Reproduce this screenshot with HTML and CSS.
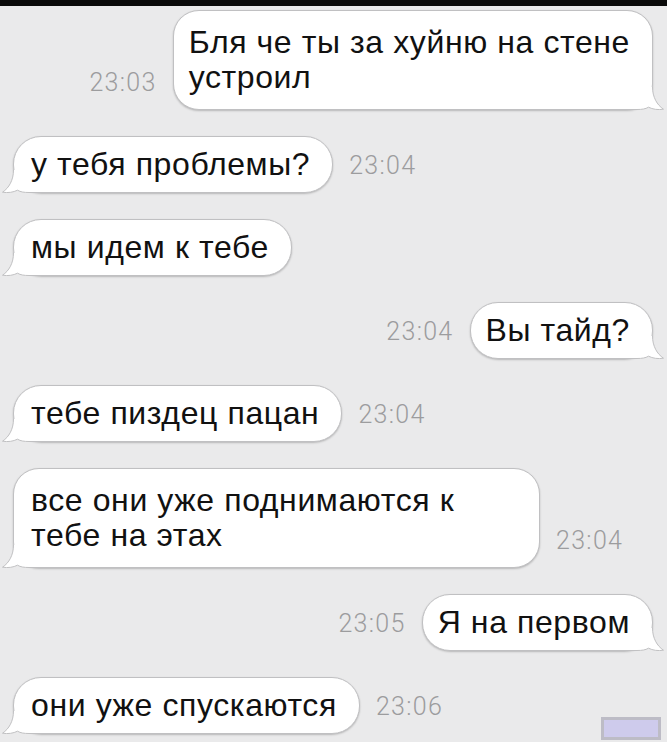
FILE: index.html
```html
<!DOCTYPE html>
<html lang="ru">
    <head>
        <meta charset="UTF-8">
        <meta name="viewport" content="width=device-width, initial-scale=1.0">
        <title>Сообщения</title>
        <link rel="stylesheet" href="styles.css">
    </head>
    <body>
        <div class="topbar"></div>
        <div id="chat">
            <div class="row row-out">
                <span class="time">23:03</span>
                <div class="bubble multi">
                    <span class="text">Бля че ты за хуйню на стене<br>устроил</span>
                    <svg class="tail tail-out" viewBox="0 0 40 23"><path class="fill" d="M11.5 0C11.5 10 7 18 0.5 22.2C6 23.2 11.5 22.2 15.5 20.2C18.5 22 22 22.5 27 22.5L40 22.5L40 0Z"/><path class="line" d="M11.5 0C11.5 10 7 18 0.5 22.2C6 23.2 11.5 22.2 15.5 20.2C18.5 22 22 22.5 27 22.5L40 22.5"/></svg>
                </div>
            </div>

            <div class="row">
                <div class="bubble">
                    <span class="text">у тебя проблемы?</span>
                    <svg class="tail" viewBox="0 0 40 23"><path class="fill" d="M11.5 0C11.5 10 7 18 0.5 22.2C6 23.2 11.5 22.2 15.5 20.2C18.5 22 22 22.5 27 22.5L40 22.5L40 0Z"/><path class="line" d="M11.5 0C11.5 10 7 18 0.5 22.2C6 23.2 11.5 22.2 15.5 20.2C18.5 22 22 22.5 27 22.5L40 22.5"/></svg>
                </div>
                <span class="time">23:04</span>
            </div>

            <div class="row">
                <div class="bubble">
                    <span class="text">мы идем к тебе</span>
                    <svg class="tail" viewBox="0 0 40 23"><path class="fill" d="M11.5 0C11.5 10 7 18 0.5 22.2C6 23.2 11.5 22.2 15.5 20.2C18.5 22 22 22.5 27 22.5L40 22.5L40 0Z"/><path class="line" d="M11.5 0C11.5 10 7 18 0.5 22.2C6 23.2 11.5 22.2 15.5 20.2C18.5 22 22 22.5 27 22.5L40 22.5"/></svg>
                </div>
            </div>

            <div class="row row-out">
                <span class="time">23:04</span>
                <div class="bubble">
                    <span class="text">Вы тайд?</span>
                    <svg class="tail tail-out" viewBox="0 0 40 23"><path class="fill" d="M11.5 0C11.5 10 7 18 0.5 22.2C6 23.2 11.5 22.2 15.5 20.2C18.5 22 22 22.5 27 22.5L40 22.5L40 0Z"/><path class="line" d="M11.5 0C11.5 10 7 18 0.5 22.2C6 23.2 11.5 22.2 15.5 20.2C18.5 22 22 22.5 27 22.5L40 22.5"/></svg>
                </div>
            </div>

            <div class="row">
                <div class="bubble">
                    <span class="text">тебе пиздец пацан</span>
                    <svg class="tail" viewBox="0 0 40 23"><path class="fill" d="M11.5 0C11.5 10 7 18 0.5 22.2C6 23.2 11.5 22.2 15.5 20.2C18.5 22 22 22.5 27 22.5L40 22.5L40 0Z"/><path class="line" d="M11.5 0C11.5 10 7 18 0.5 22.2C6 23.2 11.5 22.2 15.5 20.2C18.5 22 22 22.5 27 22.5L40 22.5"/></svg>
                </div>
                <span class="time">23:04</span>
            </div>

            <div class="row">
                <div class="bubble multi wide">
                    <span class="text">все они уже поднимаются к<br>тебе на этах</span>
                    <svg class="tail" viewBox="0 0 40 23"><path class="fill" d="M11.5 0C11.5 10 7 18 0.5 22.2C6 23.2 11.5 22.2 15.5 20.2C18.5 22 22 22.5 27 22.5L40 22.5L40 0Z"/><path class="line" d="M11.5 0C11.5 10 7 18 0.5 22.2C6 23.2 11.5 22.2 15.5 20.2C18.5 22 22 22.5 27 22.5L40 22.5"/></svg>
                </div>
                <span class="time">23:04</span>
            </div>

            <div class="row row-out">
                <span class="time">23:05</span>
                <div class="bubble">
                    <span class="text">Я на первом</span>
                    <svg class="tail tail-out" viewBox="0 0 40 23"><path class="fill" d="M11.5 0C11.5 10 7 18 0.5 22.2C6 23.2 11.5 22.2 15.5 20.2C18.5 22 22 22.5 27 22.5L40 22.5L40 0Z"/><path class="line" d="M11.5 0C11.5 10 7 18 0.5 22.2C6 23.2 11.5 22.2 15.5 20.2C18.5 22 22 22.5 27 22.5L40 22.5"/></svg>
                </div>
            </div>

            <div class="row">
                <div class="bubble">
                    <span class="text">они уже спускаются</span>
                    <svg class="tail" viewBox="0 0 40 23"><path class="fill" d="M11.5 0C11.5 10 7 18 0.5 22.2C6 23.2 11.5 22.2 15.5 20.2C18.5 22 22 22.5 27 22.5L40 22.5L40 0Z"/><path class="line" d="M11.5 0C11.5 10 7 18 0.5 22.2C6 23.2 11.5 22.2 15.5 20.2C18.5 22 22 22.5 27 22.5L40 22.5"/></svg>
                </div>
                <span class="time">23:06</span>
                <div class="stamp"></div>
            </div>
        </div>
    </body>
</html>
```

FILE: styles.css
```css
body {
    margin: 0;
    padding: 0;
    background-color: #fff;
    font-family: "Liberation Sans", Arial, sans-serif;
}

.topbar {
    height: 6px;
    background-color: #0a0a0a;
}

#chat {
    height: 736px;
    box-sizing: border-box;
    padding: 4px 14px 0 13px;
    background-color: #eaeaeb;
    display: flex;
    flex-direction: column;
    gap: 26px;
}

.row {
    display: flex;
    flex-direction: row;
    align-items: flex-end;
    justify-content: flex-start;
    gap: 16px;
}

.row-out {
    justify-content: flex-end;
}

/* bulles */

.bubble {
    position: relative;
    padding: 10px 22px 10px 17px;
    font-size: 32px;
    line-height: 35px;
    letter-spacing: 0.6px;
    color: #111;
    background-color: #fff;
    border: 1px solid #c0c0c2;
    border-radius: 28px;
    box-shadow: 0 1px 2px rgba(0, 0, 0, 0.22);
    white-space: nowrap;
}

.row-out .bubble {
    padding: 10px 22px 10px 15px;
}

.bubble.multi {
    padding-top: 14px;
    padding-bottom: 14px;
    border-radius: 26px;
}

.bubble.wide {
    width: 527px;
    box-sizing: border-box;
}

.text {
    position: relative;
    z-index: 1;
}

.tail {
    position: absolute;
    left: -12px;
    bottom: -1px;
    width: 40px;
    height: 23px;
}

.tail-out {
    left: auto;
    right: -12px;
    transform: scaleX(-1);
}

.tail .fill {
    fill: #fff;
}

.tail .line {
    fill: none;
    stroke: #c0c0c2;
    stroke-width: 1;
}

.time {
    padding-bottom: 13px;
    font-family: Roboto, "Liberation Sans", sans-serif;
    font-weight: 300;
    font-size: 25px;
    line-height: 28px;
    letter-spacing: 1.3px;
    color: #9c9c9e;
}

.stamp {
    width: 54px;
    height: 17px;
    margin-left: auto;
    margin-right: -8px;
    margin-bottom: -6px;
    background-color: #cecbec;
    border: 3px solid #bdbcc6;
}
```
